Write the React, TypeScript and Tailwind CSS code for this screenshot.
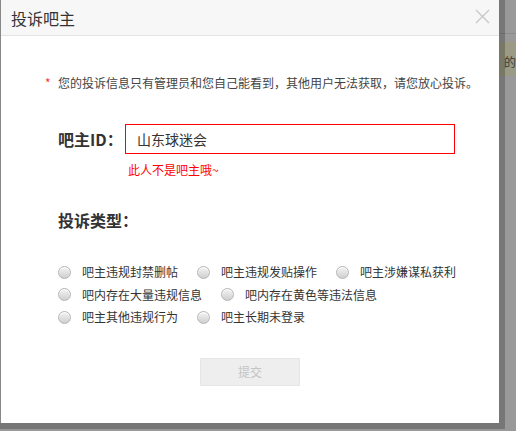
import React from 'react'

const font = { fontFamily: '"Noto Sans CJK SC", "Noto Sans", sans-serif' }

const types = [
  '吧主违规封禁删帖',
  '吧主违规发贴操作',
  '吧主涉嫌谋私获利',
  '吧内存在大量违规信息',
  '吧内存在黄色等违法信息',
  '吧主其他违规行为',
  '吧主长期未登录',
]

function Radio({ label }: { label: string }) {
  return (
    <label className="flex items-center h-[22.5px] mr-[19px] cursor-pointer">
      <span className="w-[13px] h-[13px] rounded-full border border-[#b5b5b5] bg-gradient-to-b from-[#f4f4f4] to-[#cfcfcf] shadow-[inset_0_1px_0_#fff]" />
      <span className="ml-[11px] text-[12px] leading-[16px] text-[#333]">{label}</span>
    </label>
  )
}

export default function App() {
  return (
    <div className="relative w-[516px] h-[431px] overflow-hidden bg-[#999999]" style={font}>
      {/* page behind the mask */}
      <div className="flex flex-col pl-[499px]">
        <div className="h-[33px]" />
        <div className="h-px bg-[#8a8a8a]" />
        <div className="h-[8px]" />
        <div className="h-[34px] bg-[#9b9a85] flex items-end pb-[7px] pl-[5px]">
          <span className="whitespace-nowrap text-[12px] leading-[14px] text-[#3d3d33]">的</span>
        </div>
      </div>

      {/* dialog */}
      <div className="absolute top-0 left-0 w-[505px] h-[429px] border-r-[6px] border-b-[6px] border-[rgba(0,0,0,0.22)]">
        <div className="w-full h-full bg-white border-l border-[#888]">
          <div className="h-[36px] bg-[#f7f7f7] border-b border-[#e3e3e3] flex items-center justify-between pl-[10px] pr-[9px]">
            <span className="text-[16px] leading-[20px] text-[#333]">投诉吧主</span>
            <svg width="15" height="15" viewBox="0 0 15 15" className="mt-[-2px]">
              <path d="M1 1L14 14M14 1L1 14" stroke="#c8c8c8" strokeWidth="1.4" fill="none" />
            </svg>
          </div>

          <div className="pl-[44px] flex flex-col">
            <div className="mt-[37px] flex items-center h-[20px] text-[12px] leading-[20px]">
              <span className="w-[13px] text-[#f33]">*</span>
              <span className="text-[#444] whitespace-nowrap">您的投诉信息只有管理员和您自己能看到，其他用户无法获取，请您放心投诉。</span>
            </div>

            <div className="mt-[31px] flex items-center pl-[13px]">
              <span className="w-[67px] text-[16px] leading-[20px] font-bold text-[#333]">吧主ID：</span>
              <div className="w-[330px] h-[30px] border border-[#f00] flex items-center pl-[11px] text-[14px] text-[#333]">
                山东球迷会
              </div>
            </div>

            <div className="mt-[8px] pl-[83px] text-[12px] leading-[16px] text-[#f00]">此人不是吧主哦~</div>

            <div className="mt-[30px] pl-[13px] text-[16px] leading-[24px] font-bold text-[#333]">投诉类型：</div>

            <div className="mt-[29px] ml-[13px] w-[420px] flex flex-wrap">
              {types.map((t) => (
                <Radio key={t} label={t} />
              ))}
            </div>

            <div className="mt-[29px] ml-[155px]">
              <button className="w-[100px] h-[28px] bg-[#eeeeee] border border-[#e6e6e6] text-[12px] text-[#c4c4c4]">
                提交
              </button>
            </div>
          </div>
        </div>
      </div>
    </div>
  )
}
